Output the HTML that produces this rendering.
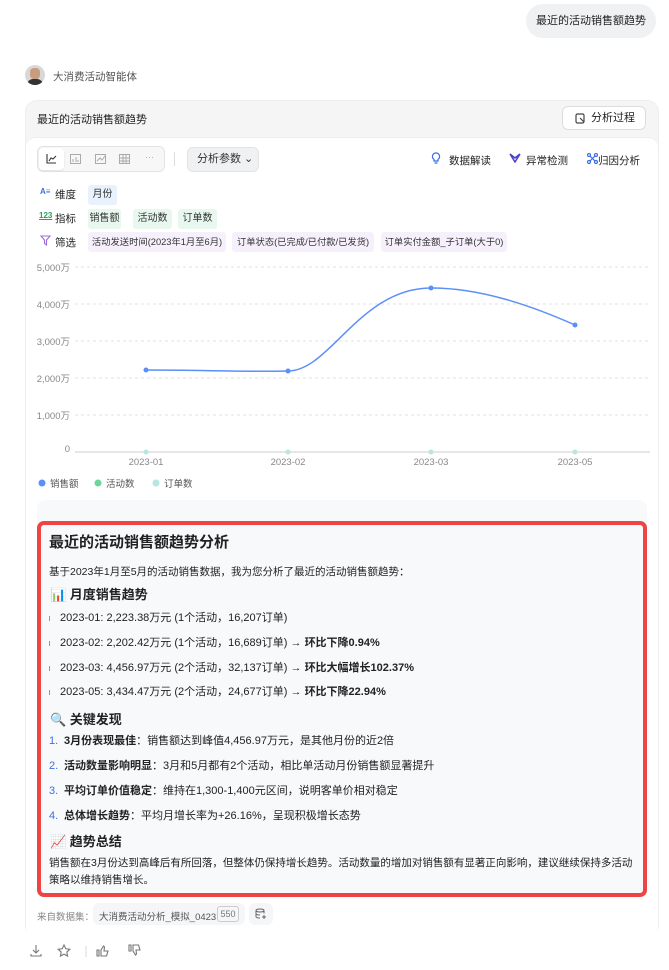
<!DOCTYPE html>
<html><head><meta charset="utf-8">
<style>
*{box-sizing:border-box;margin:0;padding:0}
body{width:669px;height:970px;background:#fff;font-family:"Liberation Sans","Noto Sans CJK SC",sans-serif;color:#222;position:relative;overflow:hidden;font-size:12px}
.abs{position:absolute}
.tag{position:absolute;height:20px;line-height:20px;border-radius:3px;font-size:10px;color:#333;text-align:center;white-space:nowrap;overflow:hidden}
.t{position:absolute;font-size:11px;color:#222;white-space:nowrap}
.li{position:absolute;left:60px;font-size:11px;line-height:14px;white-space:nowrap;color:#222}
.num{position:absolute;left:49px;font-size:11px;line-height:14px;color:#3b6fe0}
.h2{position:absolute;left:50px;font-size:13px;font-weight:bold;color:#222}
</style></head><body>
<div class="abs" style="left:526px;top:4px;width:130px;height:34px;border-radius:17px;background:#f0f1f3;font-size:11px;line-height:34px;text-align:center">最近的活动销售额趋势</div>

<div class="abs" style="left:25px;top:65px;width:20px;height:20px;border-radius:50%;background:#d8d8d8;overflow:hidden"><div style="margin:3px auto 0;width:10px;height:11px;border-radius:4px;background:#c99b7f"></div><div style="margin:0 auto;width:16px;height:8px;border-radius:6px 6px 0 0;background:#333"></div></div>
<div class="t" style="left:53px;top:69px;font-size:10.5px;color:#555">大消费活动智能体</div>

<div class="abs" style="left:25px;top:100px;width:634px;height:837px;border-radius:12px;background:#f5f5f6;border:1px solid #eee"></div>
<div class="t" style="left:37px;top:111px;font-size:11px">最近的活动销售额趋势</div>
<div class="abs" style="left:562px;top:106px;width:84px;height:24px;border-radius:6px;background:#fff;border:1px solid #ddd;font-size:11px;line-height:22px;padding-left:28px">分析过程</div>
<svg class="abs" style="left:575px;top:113px" width="11" height="11"><rect x="1" y="1" width="8" height="9" rx="1.5" stroke="#444" fill="none" stroke-width="1.2"/><path d="M5 5l4 4" stroke="#444" stroke-width="1.2"/></svg>

<div class="abs" style="left:26px;top:137px;width:632px;height:800px;border-radius:10px;background:#fff;border-top:1px solid #eee"></div>

<div class="abs" style="left:37px;top:146px;width:128px;height:26px;border:1px solid #e3e3e3;border-radius:6px;background:#f7f7f8"></div>
<div class="abs" style="left:39px;top:148px;width:25px;height:22px;background:#fff;border-radius:4px;box-shadow:0 1px 2px #ddd"></div>
<svg class="abs" style="left:45px;top:153px" width="12" height="12"><path d="M2 1v9h9M4 8l2-3 2 1 3-3" stroke="#333" fill="none" stroke-width="1.1"/></svg>
<svg class="abs" style="left:70px;top:153px" width="90" height="12" stroke="#aaa" fill="none"><rect x="0.5" y="1.5" width="10" height="9"/><path d="M3 9V6M6 9V4M8 9V7"/><rect x="25.5" y="1.5" width="10" height="9"/><path d="M27 8l3-3 2 2 3-4"/><rect x="49.5" y="1.5" width="10" height="9"/><path d="M53 1.5v9M56 1.5v9M49.5 5h10M49.5 8h10"/></svg>
<div class="t" style="left:145px;top:152px;color:#aaa;font-size:9px">···</div>
<div class="abs" style="left:174px;top:152px;width:1px;height:14px;background:#ddd"></div>
<div class="abs" style="left:187px;top:147px;width:72px;height:25px;border-radius:6px;background:#f0f1f3;border:1px solid #e3e3e3;font-size:11px;line-height:23px;padding-left:9px;color:#333">分析参数 ⌄</div>
<svg class="abs" style="left:431px;top:152px" width="10" height="13"><path d="M5 1a3.5 3.5 0 0 0-2 6.4V9h4V7.4A3.5 3.5 0 0 0 5 1zM3.5 11h3" stroke="#3b6fe0" fill="none" stroke-width="1.2"/></svg>
<div class="t" style="left:449px;top:153px;font-size:10.5px">数据解读</div>
<svg class="abs" style="left:509px;top:153px" width="12" height="10"><path d="M1 1l5 8 5-8M1 1l5 4 5-4" stroke="#4a3fd0" fill="none" stroke-width="1.5"/></svg>
<div class="t" style="left:526px;top:153px;font-size:10.5px">异常检测</div>
<svg class="abs" style="left:587px;top:153px" width="11" height="11" stroke="#3b6fe0" fill="none" stroke-width="1.2"><circle cx="2" cy="2" r="1.5"/><circle cx="9" cy="2" r="1.5"/><circle cx="2" cy="9" r="1.5"/><circle cx="9" cy="9" r="1.5"/><path d="M3 3l5 5M8 3l-5 5"/></svg>
<div class="t" style="left:598px;top:153px;font-size:10.5px">归因分析</div>

<div class="t" style="left:40px;top:187px;font-size:8px;color:#3b6fe0;font-weight:bold">A≡</div>
<div class="t" style="left:55px;top:187px;font-size:10.5px">维度</div>
<div class="tag" style="left:88px;top:185px;width:29px;background:#e8f2fd">月份</div>
<div class="t" style="left:39px;top:211px;font-size:8px;color:#2a9d5a;font-weight:bold;text-decoration:underline">123</div>
<div class="t" style="left:55px;top:211px;font-size:10.5px">指标</div>
<div class="tag" style="left:88px;top:209px;width:33px;background:#e8f8ee">销售额</div>
<div class="tag" style="left:133px;top:209px;width:39px;background:#e8f8ee">活动数</div>
<div class="tag" style="left:178px;top:209px;width:39px;background:#e8f8ee">订单数</div>
<svg class="abs" style="left:40px;top:235px" width="11" height="11"><path d="M1 1h9L6.5 5v5L4.5 8.5V5z" stroke="#9b6ee0" fill="none" stroke-width="1.1"/></svg>
<div class="t" style="left:55px;top:235px;font-size:10.5px">筛选</div>
<div class="tag" style="left:88px;top:232px;width:138px;font-size:9.3px;background:#f6f0fc">活动发送时间(2023年1月至6月)</div>
<div class="tag" style="left:232px;top:232px;width:142px;font-size:9.3px;background:#f6f0fc">订单状态(已完成/已付款/已发货)</div>
<div class="tag" style="left:381px;top:232px;width:126px;font-size:9.3px;background:#f6f0fc">订单实付金额_子订单(大于0)</div>

<svg class="abs" style="left:0;top:255px" width="669" height="245" font-family="Liberation Sans,Noto Sans CJK SC,sans-serif" font-size="9.5" fill="#888">
<g stroke="#e2e2e2" stroke-dasharray="3,3"><path d="M75 12H650M75 49H650M75 86H650M75 123H650M75 160H650"/></g>
<path d="M75 197H650" stroke="#ccc"/>
<g text-anchor="end"><text x="70" y="16">5,000万</text><text x="70" y="53">4,000万</text><text x="70" y="90">3,000万</text><text x="70" y="127">2,000万</text><text x="70" y="164">1,000万</text><text x="70" y="197">0</text></g>
<g text-anchor="middle"><text x="146" y="210">2023-01</text><text x="288" y="210">2023-02</text><text x="431" y="210">2023-03</text><text x="575" y="210">2023-05</text></g>
<path d="M146 115C200 115 250 117 288 116C330 116 360 33 431 33C480 33 530 50 575 70" stroke="#5b8ff9" stroke-width="1.5" fill="none"/>
<g fill="#5b8ff9"><circle cx="146" cy="115" r="2.5"/><circle cx="288" cy="116" r="2.5"/><circle cx="431" cy="33" r="2.5"/><circle cx="575" cy="70" r="2.5"/></g>
<g fill="#b5e6e0"><circle cx="146" cy="197" r="2.5"/><circle cx="288" cy="197" r="2.5"/><circle cx="431" cy="197" r="2.5"/><circle cx="575" cy="197" r="2.5"/></g>
<circle cx="42" cy="228" r="3.5" fill="#5b8ff9"/><text x="50" y="232" fill="#555">销售额</text>
<circle cx="98" cy="228" r="3.5" fill="#6dd59a"/><text x="106" y="232" fill="#555">活动数</text>
<circle cx="156" cy="228" r="3.5" fill="#b5e6e0"/><text x="164" y="232" fill="#555">订单数</text>
</svg>

<div class="abs" style="left:37px;top:500px;width:610px;height:30px;border-radius:8px;background:#f8f9fb"></div>
<div class="abs" style="left:37px;top:521px;width:610px;height:376px;border:4px solid #ee4444;border-radius:7px;background:#f8f9fb"></div>

<div class="t" style="left:49px;top:531px;font-size:15px;font-weight:bold;color:#222">最近的活动销售额趋势分析</div>
<div class="t" style="left:49px;top:564px;font-size:10.5px">基于2023年1月至5月的活动销售数据，我为您分析了最近的活动销售额趋势：</div>
<div class="h2" style="top:584px">📊 月度销售趋势</div>
<div class="li" style="top:611px">2023-01: 2,223.38万元 (1个活动，16,207订单)</div>
<div class="li" style="top:636px">2023-02: 2,202.42万元 (1个活动，16,689订单) → <b>环比下降0.94%</b></div>
<div class="li" style="top:661px">2023-03: 4,456.97万元 (2个活动，32,137订单) → <b>环比大幅增长102.37%</b></div>
<div class="li" style="top:685px">2023-05: 3,434.47万元 (2个活动，24,677订单) → <b>环比下降22.94%</b></div>
<div class="abs" style="left:49px;top:616px;width:1px;height:5px;background:#999"></div>
<div class="abs" style="left:49px;top:641px;width:1px;height:5px;background:#999"></div>
<div class="abs" style="left:49px;top:666px;width:1px;height:5px;background:#999"></div>
<div class="abs" style="left:49px;top:690px;width:1px;height:5px;background:#999"></div>
<div class="h2" style="top:709px">🔍 关键发现</div>
<div class="num" style="top:734px">1.</div><div class="li" style="left:64px;top:734px"><b>3月份表现最佳</b>：销售额达到峰值4,456.97万元，是其他月份的近2倍</div>
<div class="num" style="top:759px">2.</div><div class="li" style="left:64px;top:759px"><b>活动数量影响明显</b>：3月和5月都有2个活动，相比单活动月份销售额显著提升</div>
<div class="num" style="top:784px">3.</div><div class="li" style="left:64px;top:784px"><b>平均订单价值稳定</b>：维持在1,300-1,400元区间，说明客单价相对稳定</div>
<div class="num" style="top:809px">4.</div><div class="li" style="left:64px;top:809px"><b>总体增长趋势</b>：平均月增长率为+26.16%，呈现积极增长态势</div>
<div class="h2" style="top:831px">📈 趋势总结</div>
<div class="abs" style="left:49px;top:855px;width:592px;font-size:10.5px;line-height:17px;color:#222">销售额在3月份达到高峰后有所回落，但整体仍保持增长趋势。活动数量的增加对销售额有显著正向影响，建议继续保持多活动策略以维持销售增长。</div>

<div class="t" style="left:37px;top:909px;font-size:9.5px;color:#888">来自数据集：</div>
<div class="abs" style="left:93px;top:903px;width:152px;height:22px;border-radius:6px;background:#f5f6f8"></div>
<div class="t" style="left:99px;top:909px;font-size:9.5px;color:#555">大消费活动分析_模拟_0423</div>
<div class="abs" style="left:217px;top:906px;width:22px;height:16px;border:1px solid #ccc;border-radius:3px;font-size:9px;color:#777;text-align:center;line-height:14px">550</div>
<div class="abs" style="left:249px;top:903px;width:24px;height:22px;border-radius:6px;background:#f5f6f8"></div>
<svg class="abs" style="left:255px;top:908px" width="12" height="12" stroke="#666" fill="none"><ellipse cx="5" cy="2.5" rx="4" ry="1.5"/><path d="M1 2.5v6c0 1 2 1.5 4 1.5M9 2.5v3M1 5.5c0 1 2 1.5 4 1.5M7 9h4M9 7v4"/></svg>

<svg class="abs" style="left:30px;top:944px" width="120" height="14" stroke="#777" fill="none" stroke-width="1.1">
<path d="M6 1v8M3 6l3 3 3-3M1 10v2h10v-2"/>
<path d="M34 1l1.8 3.8 4 .5-3 2.8.8 4-3.6-2-3.6 2 .8-4-3-2.8 4-.5z"/>
<path d="M56 2v11" stroke="#ddd"/>
<path d="M69 6v6h-2V6zM71 12h5.5l1.5-5h-4l.5-4-1-1-2.5 4z"/>
<path d="M101 7V1h-2v6zM103 1h5.5l1.5 5h-4l.5 4-1 1-2.5-4z"/>
</svg>
</body></html>
